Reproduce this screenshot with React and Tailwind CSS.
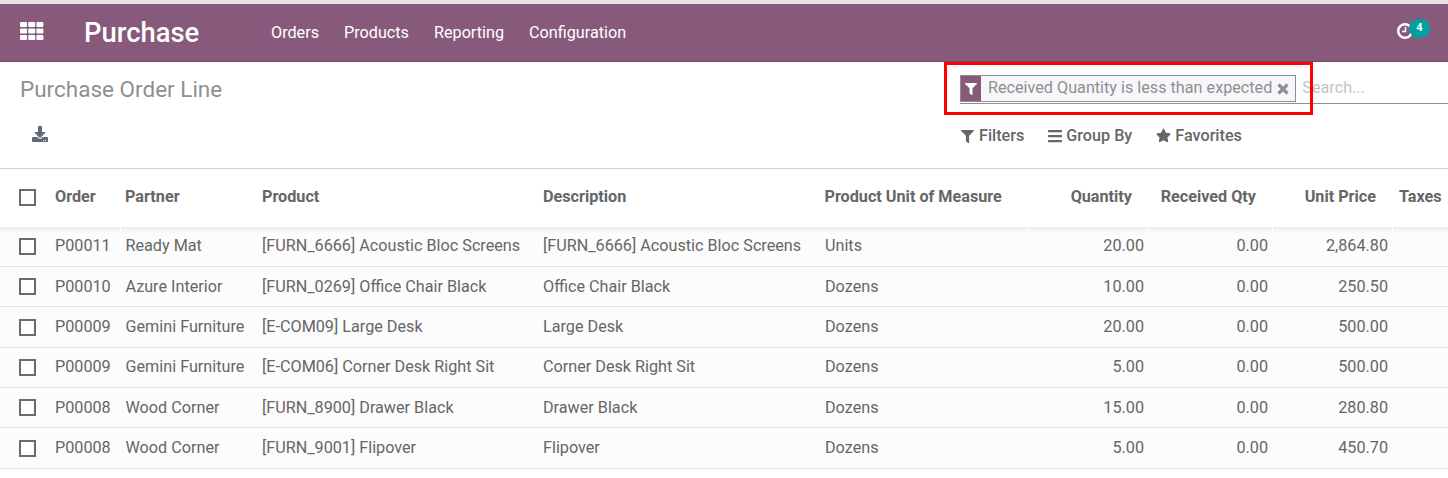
import React from "react";
import { FaFilter, FaBars, FaStar, FaDownload } from "react-icons/fa";

const rows = [
  ["P00011", "Ready Mat", "[FURN_6666] Acoustic Bloc Screens", "[FURN_6666] Acoustic Bloc Screens", "Units", "20.00", "0.00", "2,864.80"],
  ["P00010", "Azure Interior", "[FURN_0269] Office Chair Black", "Office Chair Black", "Dozens", "10.00", "0.00", "250.50"],
  ["P00009", "Gemini Furniture", "[E-COM09] Large Desk", "Large Desk", "Dozens", "20.00", "0.00", "500.00"],
  ["P00009", "Gemini Furniture", "[E-COM06] Corner Desk Right Sit", "Corner Desk Right Sit", "Dozens", "5.00", "0.00", "500.00"],
  ["P00008", "Wood Corner", "[FURN_8900] Drawer Black", "Drawer Black", "Dozens", "15.00", "0.00", "280.80"],
  ["P00008", "Wood Corner", "[FURN_9001] Flipover", "Flipover", "Dozens", "5.00", "0.00", "450.70"],
];

const gridCols = "grid grid-cols-[43px_78px_137px_281px_281px_209px_120px_124px_120px_55px]";

function Checkbox() {
  return <span className="block w-[17px] h-[17px] border-2 border-[#6b6b6b] bg-white" />;
}

function GridIcon() {
  return (
    <svg width="24" height="18" viewBox="0 0 24 18" fill="#fff">
      {[0, 6.5, 13].map((y) =>
        [0, 8.2, 16.4].map((x) => <rect key={`${x}-${y}`} x={x} y={y} width="7" height="5" rx="1" />)
      )}
    </svg>
  );
}

export default function App() {
  return (
    <div className="relative w-[1448px] h-[478px] overflow-hidden bg-white text-[#666666] font-['Roboto',sans-serif] text-[16.2px]">
      <div className="h-[4px] bg-[#e4e4e4]" />

      {/* Navbar */}
      <div className="h-[58px] bg-[#875a7b] border-b border-[#6d4a64] flex items-center text-white">
        <div className="ml-[20px] w-[24px] -mt-[3px]">
          <GridIcon />
        </div>
        <div className="ml-[40px] w-[187px] text-[27.4px] font-medium leading-none mt-[2px]">Purchase</div>
        <div className="flex gap-[25px] mt-[1px]">
          <span>Orders</span>
          <span>Products</span>
          <span>Reporting</span>
          <span>Configuration</span>
        </div>
        <div className="ml-auto mr-[18px] relative w-[33px] h-[20px] -mt-[3px]">
          <svg className="absolute left-0 top-[2px]" width="16" height="16" viewBox="0 0 16 16" fill="none" stroke="#fff">
            <circle cx="8" cy="8" r="6.75" strokeWidth="2.5" />
            <path d="M8.5 4v4.5H5" strokeWidth="1.5" />
          </svg>
          <span className="absolute left-[12px] top-[-2px] w-[21px] h-[19px] rounded-full bg-[#00a09d] text-[11px] font-bold flex items-center justify-center">4</span>
        </div>
      </div>

      {/* Control panel */}
      <div className="h-[107px] flex border-b border-[#cfcfcf]">
        <div className="w-[960px] shrink-0 pl-[20px]">
          <div className="mt-[12px] text-[22.5px] leading-[30px] text-[#8f8f8f]">Purchase Order Line</div>
          <FaDownload className="ml-[12px] mt-[22px] text-[16px] text-[#5f6b78]" />
        </div>
        <div className="flex-1">
          <div className="mt-[13px] h-[29px] flex items-stretch border-b border-[#8f8f8f]">
            <div className="flex items-stretch h-[27px] border border-[#8f8f8f] bg-[#f6f7fa]">
              <span className="w-[20px] bg-[#875a7b] flex items-center justify-center">
                <FaFilter className="text-[12px] text-white" />
              </span>
              <span className="pl-[7px] pr-[5px] leading-[24px] text-[#8f8f8f]">Received Quantity is less than expected</span>
              <span className="pr-[6px] flex items-center">
                <svg width="12" height="12" viewBox="0 0 12 12" stroke="#8f8f8f" strokeWidth="3.2">
                  <path d="M1.5 1.5l9 9M10.5 1.5l-9 9" />
                </svg>
              </span>
            </div>
            <span className="pl-[6px] leading-[26px] text-[#c4c4c4]">Search...</span>
          </div>
          <div className="mt-[20px] ml-[1px] flex items-center font-medium text-[#666666]">
            <FaFilter className="text-[13px]" />
            <span className="ml-[5px]">Filters</span>
            <FaBars className="text-[16px] ml-[23px]" />
            <span className="ml-[3px]">Group By</span>
            <FaStar className="text-[15px] ml-[24px] -mt-[1px]" />
            <span className="ml-[4px]">Favorites</span>
          </div>
        </div>
      </div>

      {/* Table */}
      <div className={`${gridCols} h-[57.8px] items-center font-bold pb-[1px]`}>
        <div className="pl-[19px]"><Checkbox /></div>
        <div className="pl-[12px]">Order</div>
        <div className="pl-[4px]">Partner</div>
        <div className="pl-[4px]">Product</div>
        <div className="pl-[4px]">Description</div>
        <div className="pl-[4.5px]">Product Unit of Measure</div>
        <div className="text-right pr-[17px]">Quantity</div>
        <div className="text-right pr-[17px]">Received Qty</div>
        <div className="text-right pr-[17px]">Unit Price</div>
        <div className="pl-[6px]">Taxes</div>
      </div>
      {rows.map((r, i) => (
        <div
          key={i}
          className={`${gridCols} h-[40.33px] border-b border-[#dee2e6] bg-[#fcfcfc] ${i === 0 ? "shadow-[inset_0_6px_6px_-5px_rgba(0,0,0,0.12)]" : ""}`}
        >
          <div className="pl-[19px] flex items-center"><Checkbox /></div>
          <div className="pl-[12px] flex items-center border-r border-white">{r[0]}</div>
          <div className="pl-[4.5px] flex items-center whitespace-nowrap">{r[1]}</div>
          <div className="pl-[4px] flex items-center whitespace-nowrap">{r[2]}</div>
          <div className="pl-[4px] flex items-center whitespace-nowrap">{r[3]}</div>
          <div className="pl-[5px] flex items-center border-r border-white">{r[4]}</div>
          <div className="flex items-center justify-end pr-[4px] border-r border-white">{r[5]}</div>
          <div className="flex items-center justify-end pr-[4px] border-r border-white">{r[6]}</div>
          <div className="flex items-center justify-end pr-[4px] border-r border-white">{r[7]}</div>
          <div />
        </div>
      ))}

      {/* Red highlight drawn over the screenshot */}
      <div className="absolute left-[944px] top-[62px] w-[369px] h-[53px] border-[3px] border-[#ff0000] pointer-events-none" />
    </div>
  );
}
